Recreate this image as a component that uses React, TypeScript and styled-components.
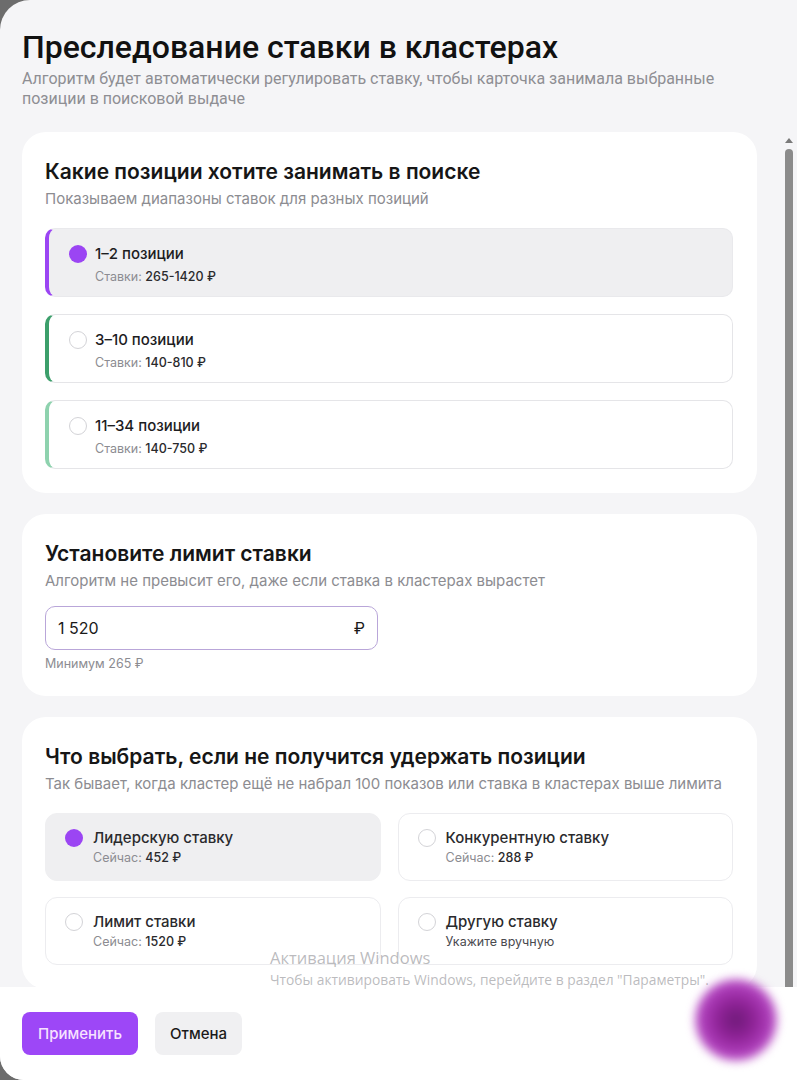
import React from "react";
import styled, { createGlobalStyle } from "styled-components";

type Position = {
    id: string;
    title: string;
    range: string;
    accent: string;
};

type Fallback = {
    id: string;
    title: string;
    caption: string;
    value?: string;
};

const positions: Position[] = [
    { id: "top", title: "1–2 позиции", range: "265-1420 ₽", accent: "#9b45f3" },
    { id: "mid", title: "3–10 позиции", range: "140-810 ₽", accent: "#3c9f6b" },
    { id: "low", title: "11–34 позиции", range: "140-750 ₽", accent: "#8ed2ae" },
];

const fallbacks: Fallback[] = [
    { id: "leader", title: "Лидерскую ставку", caption: "Сейчас:", value: "452 ₽" },
    { id: "rival", title: "Конкурентную ставку", caption: "Сейчас:", value: "288 ₽" },
    { id: "limit", title: "Лимит ставки", caption: "Сейчас:", value: "1520 ₽" },
    { id: "custom", title: "Другую ставку", caption: "Укажите вручную" },
];

const App: React.FC = () => {
    const [position, setPosition] = React.useState("top");
    const [fallback, setFallback] = React.useState("leader");
    const [limit, setLimit] = React.useState("1 520");

    return (
        <>
            <GlobalStyle />
            <Dialog>
                <Header>
                    <Title>Преследование ставки в кластерах</Title>
                    <Lead>
                        Алгоритм будет автоматически регулировать ставку, чтобы карточка занимала выбранные
                        позиции в поисковой выдаче
                    </Lead>
                </Header>

                <Body>
                    <Content>
                        <Card>
                            <CardTitle>Какие позиции хотите занимать в поиске</CardTitle>
                            <CardHint>Показываем диапазоны ставок для разных позиций</CardHint>
                            <PositionList>
                                {positions.map((p) => (
                                    <PositionOption
                                        key={p.id}
                                        $accent={p.accent}
                                        $selected={position === p.id}
                                        onClick={() => setPosition(p.id)}
                                    >
                                        <Radio $checked={position === p.id} />
                                        <OptionText>
                                            <OptionLabel>{p.title}</OptionLabel>
                                            <OptionMeta>
                                                Ставки: <strong>{p.range}</strong>
                                            </OptionMeta>
                                        </OptionText>
                                    </PositionOption>
                                ))}
                            </PositionList>
                        </Card>

                        <Card>
                            <CardTitle>Установите лимит ставки</CardTitle>
                            <CardHint>Алгоритм не превысит его, даже если ставка в кластерах вырастет</CardHint>
                            <Field>
                                <FieldInput value={limit} onChange={(e) => setLimit(e.target.value)} />
                                <Currency>₽</Currency>
                            </Field>
                            <FieldNote>Минимум 265 ₽</FieldNote>
                        </Card>

                        <Card>
                            <CardTitle>Что выбрать, если не получится удержать позиции</CardTitle>
                            <CardHint>
                                Так бывает, когда кластер ещё не набрал 100 показов или ставка в кластерах выше лимита
                            </CardHint>
                            <ChoiceGrid>
                                {fallbacks.map((f) => (
                                    <ChoiceOption
                                        key={f.id}
                                        $selected={fallback === f.id}
                                        onClick={() => setFallback(f.id)}
                                    >
                                        <Radio $checked={fallback === f.id} />
                                        <OptionText>
                                            <ChoiceLabel>{f.title}</ChoiceLabel>
                                            <ChoiceMeta $plain={!f.value}>
                                                {f.caption} {f.value && <strong>{f.value}</strong>}
                                            </ChoiceMeta>
                                        </OptionText>
                                    </ChoiceOption>
                                ))}
                            </ChoiceGrid>
                        </Card>
                    </Content>

                    <ScrollRail>
                        <svg width="8" height="5" viewBox="0 0 8 5">
                            <path d="M4 0 L8 5 L0 5 Z" fill="#7a7a7a" />
                        </svg>
                        <ScrollThumb />
                    </ScrollRail>
                </Body>

                <Footer>
                    <ApplyButton>Применить</ApplyButton>
                    <CancelButton>Отмена</CancelButton>
                    <ChatBubble />
                </Footer>

                <Watermark>
                    <WatermarkTitle>Активация Windows</WatermarkTitle>
                    <WatermarkText>Чтобы активировать Windows, перейдите в раздел "Параметры".</WatermarkText>
                </Watermark>
            </Dialog>
        </>
    );
};


const GlobalStyle = createGlobalStyle`
    html, body {
        margin: 0;
        padding: 0;
        background: #6c6c6c;
    }

    body {
        font-family: Inter, "Noto Sans", sans-serif;
        color: #161616;
    }

    * {
        box-sizing: border-box;
    }
`;


const Dialog = styled.div`
    position: relative;
    width: 797px;
    height: 1080px;
    display: flex;
    flex-direction: column;
    background: #f5f5f7;
    border-radius: 30px 0 0 24px;
    overflow: hidden;
`;


const Header = styled.header`
    flex-shrink: 0;
    height: 132px;
    padding: 29px 22px 0;
`;

const Title = styled.h1`
    margin: 0;
    font-family: Roboto, "Liberation Sans", sans-serif;
    font-size: 32px;
    font-weight: 500;
    line-height: 36px;
    color: #111;
`;

const Lead = styled.p`
    margin: 4px 0 0;
    max-width: 720px;
    font-family: Roboto, "Liberation Sans", sans-serif;
    font-size: 16px;
    line-height: 20px;
    color: #8e8e93;
`;


const Body = styled.div`
    flex: 1;
    min-height: 0;
    display: flex;
`;

const Content = styled.div`
    flex: 1;
    display: flex;
    flex-direction: column;
    gap: 21px;
    padding: 0 26px 0 22px;
    overflow: hidden;
`;

const ScrollRail = styled.div`
    width: 14px;
    flex-shrink: 0;
    display: flex;
    flex-direction: column;
    align-items: center;
    padding-top: 6px;

    svg {
        flex-shrink: 0;
        margin-left: -2px;
    }
`;

const ScrollThumb = styled.div`
    flex: 1;
    width: 8px;
    margin: 6px 2px 0 0;
    background: #8b8b8b;
    border-radius: 4px 4px 0 0;
`;


const Card = styled.section`
    flex-shrink: 0;
    padding: 28px 24px 24px 23px;
    background: #fff;
    border-radius: 24px;
`;

const CardTitle = styled.h2`
    margin: 0;
    font-size: 21px;
    font-weight: 600;
    line-height: 24px;
    color: #161616;
`;

const CardHint = styled.p`
    margin: 5px 0 0;
    font-size: 15px;
    line-height: 20px;
    color: #8c8c91;
`;


const PositionList = styled.div`
    display: flex;
    flex-direction: column;
    gap: 17px;
    margin-top: 19px;
`;

const PositionOption = styled.div<{ $accent: string; $selected: boolean }>`
    display: flex;
    align-items: flex-start;
    gap: 8px;
    height: 69px;
    padding: 15px 20px 0;
    background: ${(p) => (p.$selected ? "#efeff1" : "#fff")};
    border: 1px solid ${(p) => (p.$selected ? "#e9e9ec" : "#e5e5e8")};
    border-left: 4px solid ${(p) => p.$accent};
    border-radius: 10px;
    cursor: pointer;
`;

const ChoiceGrid = styled.div`
    display: grid;
    grid-template-columns: 1fr 1fr;
    column-gap: 17px;
    row-gap: 16px;
    margin-top: 19px;
`;

const ChoiceOption = styled.div<{ $selected: boolean }>`
    display: flex;
    align-items: flex-start;
    gap: 10px;
    height: 68px;
    padding: 14px 20px 0 19px;
    background: ${(p) => (p.$selected ? "#efeff1" : "#fff")};
    border: 1px solid ${(p) => (p.$selected ? "#efeff1" : "#ececef")};
    border-radius: 12px;
    cursor: pointer;
`;

const Radio = styled.span<{ $checked: boolean }>`
    flex-shrink: 0;
    width: 18px;
    height: 18px;
    margin-top: 1px;
    border-radius: 50%;
    background: ${(p) => (p.$checked ? "#9b45f3" : "#fff")};
    border: ${(p) => (p.$checked ? "none" : "1.5px solid #d3d3d7")};
`;

const OptionText = styled.div`
    display: flex;
    flex-direction: column;
`;

const OptionLabel = styled.span`
    font-size: 15px;
    font-weight: 500;
    line-height: 20px;
    color: #1d1d1f;
`;

const ChoiceLabel = styled(OptionLabel)`
    font-weight: 450;
    color: #2a2a2d;
`;

const OptionMeta = styled.span`
    margin-top: 5px;
    font-size: 12.5px;
    line-height: 16px;
    color: #8c8c91;

    strong {
        font-weight: 500;
        color: #2a2a2d;
    }
`;

const ChoiceMeta = styled(OptionMeta)<{ $plain: boolean }>`
    margin-top: 2px;
    color: ${(p) => (p.$plain ? "#4a4a4f" : "#8c8c91")};
`;


const Field = styled.label`
    display: flex;
    align-items: center;
    width: 333px;
    height: 44px;
    margin-top: 15px;
    padding: 0 12px;
    border: 1px solid #b9a6d9;
    border-radius: 10px;
    background: #fff;
`;

const FieldInput = styled.input`
    flex: 1;
    min-width: 0;
    border: none;
    outline: none;
    padding: 0;
    background: transparent;
    font-family: inherit;
    font-size: 16px;
    color: #1a1a1a;
`;

const Currency = styled.span`
    font-size: 16px;
    color: #1a1a1a;
`;

const FieldNote = styled.p`
    margin: 6px 0 0;
    font-size: 12.5px;
    line-height: 16px;
    color: #8c8c91;
`;


const Footer = styled.footer`
    position: relative;
    flex-shrink: 0;
    height: 93px;
    display: flex;
    align-items: flex-start;
    gap: 17px;
    padding: 25px 22px 0;
    background: #fff;
`;

const ApplyButton = styled.button`
    height: 43px;
    padding: 0 16px;
    border: none;
    border-radius: 8px;
    background: #9d47f7;
    color: #f7e2ff;
    font-family: inherit;
    font-size: 15px;
    font-weight: 500;
    cursor: pointer;
`;

const CancelButton = styled(ApplyButton)`
    padding: 0 15px;
    background: #f0f0f2;
    color: #1a1a1a;
`;

const ChatBubble = styled.div`
    position: absolute;
    top: -8px;
    right: 20px;
    width: 82px;
    height: 82px;
    border-radius: 50%;
    background: radial-gradient(circle, #6e1a78 0%, #8e2296 30%, #aa3ab6 55%, #c868d4 75%, rgba(235, 170, 245, 0) 100%);
    filter: blur(5px);
`;


const Watermark = styled.div`
    position: absolute;
    left: 270px;
    top: 946px;
    pointer-events: none;
    font-family: "Open Sans", "Noto Sans", sans-serif;
    color: rgba(120, 120, 125, 0.5);
`;

const WatermarkTitle = styled.div`
    font-size: 16.5px;
    line-height: 24px;
`;

const WatermarkText = styled.div`
    font-size: 13.8px;
    line-height: 20px;
`;


export default App;
